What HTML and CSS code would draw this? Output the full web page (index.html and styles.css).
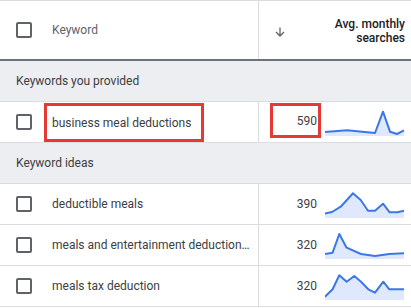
FILE: index.html
```html
<!DOCTYPE html>
<html lang="en">
<head>
<meta charset="utf-8">
<title>Keyword ideas</title>
<link rel="stylesheet" href="styles.css">
</head>
<body>
<div class="grid">
  <div class="row head">
    <div class="cell kw">
      <span class="cb"></span>
      <span class="label">Keyword</span>
    </div>
    <div class="cell vol">
      <svg class="sort" width="10" height="10" viewBox="0 0 10 10" aria-hidden="true">
        <path d="M5 0.5V9M1 5l4 4 4-4" fill="none" stroke="#5f6368" stroke-width="1.3"/>
      </svg>
      <span class="title">Avg. monthly<br>searches</span>
    </div>
  </div>

  <div class="section">Keywords you provided</div>

  <div class="row">
    <div class="cell kw">
      <span class="cb"></span>
      <span class="text mark">business meal deductions</span>
    </div>
    <div class="cell vol">
      <span class="num mark-num">590</span>
      <svg class="spark" width="80" height="30" viewBox="0 0 80 30">
        <path class="area" d="M0 26L22 24.3L50 27L58 5.7L65 25.7L72 28L79 24.3L79 30L0 30Z"/>
        <path class="line" d="M0 26L22 24.3L50 27L58 5.7L65 25.7L72 28L79 24.3"/>
      </svg>
    </div>
  </div>

  <div class="section">Keyword ideas</div>

  <div class="row">
    <div class="cell kw">
      <span class="cb"></span>
      <span class="text">deductible meals</span>
    </div>
    <div class="cell vol">
      <span class="num">390</span>
      <svg class="spark" width="80" height="30" viewBox="0 0 80 30">
        <path class="area" d="M0 25.5L7 24L15.7 18.7L28 5.3L35.7 12L43 22.7L50 22.7L58 15.7L64.7 24.3L72.3 24.3L79 22.7L79 30L0 30Z"/>
        <path class="line" d="M0 25.5L7 24L15.7 18.7L28 5.3L35.7 12L43 22.7L50 22.7L58 15.7L64.7 24.3L72.3 24.3L79 22.7"/>
      </svg>
    </div>
  </div>

  <div class="row">
    <div class="cell kw">
      <span class="cb"></span>
      <span class="text">meals and entertainment deduction for business</span>
    </div>
    <div class="cell vol">
      <span class="num">320</span>
      <svg class="spark" width="80" height="30" viewBox="0 0 80 30">
        <path class="area" d="M0 25L7.6 23.7L14.3 5L21.6 18.7L36 25L50 27L64.3 25L79 24.3L79 30L0 30Z"/>
        <path class="line" d="M0 25L7.6 23.7L14.3 5L21.6 18.7L36 25L50 27L64.3 25L79 24.3"/>
      </svg>
    </div>
  </div>

  <div class="row">
    <div class="cell kw">
      <span class="cb"></span>
      <span class="text">meals tax deduction</span>
    </div>
    <div class="cell vol">
      <span class="num">320</span>
      <svg class="spark" width="80" height="30" viewBox="0 0 80 30">
        <path class="area" d="M0 26.7L7.6 19.3L14.3 5.3L21.6 11.7L29.3 6L36 11.7L43.3 19.3L50 22.7L58.3 11.7L64.3 19.3L79 19.3L79 30L0 30Z"/>
        <path class="line" d="M0 26.7L7.6 19.3L14.3 5.3L21.6 11.7L29.3 6L36 11.7L43.3 19.3L50 22.7L58.3 11.7L64.3 19.3L79 19.3"/>
      </svg>
    </div>
  </div>
</div>
</body>
</html>
```

FILE: styles.css
```css
* {
  box-sizing: border-box;
}

body {
  margin: 0;
  background: #ffffff;
  font-family: Roboto, "Noto Sans", Arial, sans-serif;
  font-size: 12px;
  color: #3c4043;
  overflow: hidden;
}

.grid {
  border-top: 1px solid #dadce0;
}

.row {
  display: grid;
  grid-template-columns: 258px 1fr;
  height: 41px;
  border-bottom: 1px solid #dadce0;
}

.row.head {
  height: 60px;
  border-bottom: 2px solid #6f7377;
}

.cell {
  display: flex;
  align-items: center;
  min-width: 0;
}

.cell.kw {
  padding: 0 8px 0 16px;
  gap: 20px;
}

.cell.vol {
  border-left: 1px solid #dadce0;
  justify-content: flex-end;
  padding-right: 6px;
  gap: 8px;
}

.head .cell.vol {
  justify-content: space-between;
  padding-left: 16px;
}

.cb {
  flex: none;
  width: 16px;
  height: 16px;
  border: 2px solid #5f6368;
  border-radius: 2px;
}

.label {
  color: #5f6368;
}

.title {
  color: #202124;
  font-weight: 500;
  text-align: right;
  line-height: 14px;
  padding-top: 1px;
}

.sort {
  margin-top: 3px;
}

.text {
  white-space: nowrap;
  overflow: hidden;
  text-overflow: ellipsis;
  min-width: 0;
}

.mark {
  margin-left: -8px;
  height: 39px;
  display: flex;
  align-items: center;
  padding: 0 10px 0 5px;
  border: 3px solid #e53935;
  margin-top: 1px;
}

.num {
  color: #3c4043;
}

.mark-num {
  width: 51px;
  height: 35px;
  margin-right: -4px;
  margin-top: -3px;
  display: flex;
  align-items: center;
  justify-content: flex-end;
  padding-right: 1px;
  border: 3px solid #e53935;
}

.spark {
  flex: none;
  align-self: flex-start;
  margin-top: 4px;
}

.spark .area {
  fill: #dfe8fc;
}

.spark .line {
  fill: none;
  stroke: #3b78e7;
  stroke-width: 2;
  stroke-linejoin: round;
}

.section {
  height: 41px;
  display: flex;
  align-items: center;
  padding-left: 16px;
  background: #eceef1;
  border-bottom: 1px solid #dadce0;
  color: #3c4043;
}
```
